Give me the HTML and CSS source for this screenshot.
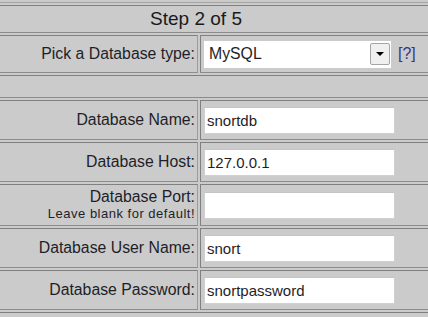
FILE: index.html
```html
<!DOCTYPE html>
<html>
<head>
	<title>Setup - Step 2 of 5</title>
	<link rel="stylesheet" href="styles.css">
</head>
<body>
	<div class="page">
		<table class="setup">
			<colgroup>
				<col class="col-label">
				<col class="col-field">
			</colgroup>
			<tr class="row-title">
				<td colspan="2">Step 2 of 5</td>
			</tr>
			<tr class="row-type">
				<td class="label">Pick a Database type:</td>
				<td class="field">
					<span class="select">
						<span class="select-value">MySQL</span>
						<span class="select-btn"><span class="arrow"></span></span>
					</span><a href="#" class="help">[?]</a>
				</td>
			</tr>
			<tr class="row-blank">
				<td colspan="2"></td>
			</tr>
			<tr class="row-input">
				<td class="label">Database Name:</td>
				<td class="field"><input type="text" value="snortdb"></td>
			</tr>
			<tr class="row-input">
				<td class="label">Database Host:</td>
				<td class="field"><input type="text" value="127.0.0.1"></td>
			</tr>
			<tr class="row-input row-port">
				<td class="label">Database Port:<br><span class="hint">Leave blank for default!</span></td>
				<td class="field"><input type="text" value=""></td>
			</tr>
			<tr class="row-input">
				<td class="label">Database User Name:</td>
				<td class="field"><input type="text" value="snort"></td>
			</tr>
			<tr class="row-input">
				<td class="label">Database Password:</td>
				<td class="field"><input type="text" value="snortpassword"></td>
			</tr>
			<tr class="row-blank">
				<td colspan="2"></td>
			</tr>
		</table>
	</div>
</body>
</html>
```

FILE: styles.css
```css
/* Reset default margin, padding, and box-sizing */
* {
	margin: 0;
	padding: 0;
	box-sizing: border-box;
}

body {
	font-family: "Liberation Sans", Arial, sans-serif;
	background-color: #cbcbcb;
	color: #1e1e28;
}

.page {
	width: 428px;
	height: 317px;
	overflow: hidden;
	padding-top: 2px;
}

.setup {
	width: 472px;
	margin-left: -40px;
	table-layout: fixed;
	border-collapse: separate;
	border-spacing: 2px;
	border-top: 1px solid #a4a4a4;
}

.setup .col-label {
	width: 236px;
}

.setup td {
	border: 1px solid #808080;
	border-right-color: #9c9c9c;
	border-bottom-color: #8c8c8c;
	font-size: 15.8px;
}

.row-title td {
	height: 28px;
	text-align: center;
	font-size: 19px;
	color: #1a1a1a;
}

.row-type td {
	height: 38px;
}

.row-blank td {
	height: 23px;
}

.row-input td {
	height: 40px;
}

.row-port td {
	height: 42px;
}

.setup .label {
	text-align: right;
	padding-right: 2px;
	white-space: nowrap;
}

.row-port .label {
	line-height: 16px;
	padding-top: 1px;
}

.row-port .hint {
	font-size: 13px;
	letter-spacing: 0.5px;
}

.setup .field {
	padding-left: 3px;
}

.field input {
	width: 191px;
	height: 27px;
	border: 1px solid #d0d0d0;
	border-top-color: #c4c4c4;
	background: #fff;
	font-family: "Liberation Sans", Arial, sans-serif;
	font-size: 15px;
	color: #1e1e28;
	padding: 0 2px;
	vertical-align: middle;
}

.select {
	display: inline-flex;
	align-items: center;
	justify-content: space-between;
	width: 187px;
	height: 27px;
	background: #fff;
	padding: 0 1px 0 5px;
	vertical-align: middle;
}

.select-btn {
	width: 20px;
	height: 22px;
	background: #f0f0f0;
	border: 1px solid #a6a6a6;
	border-radius: 2px;
	display: flex;
	align-items: center;
	justify-content: center;
}

.arrow {
	width: 0;
	height: 0;
	border-left: 4px solid transparent;
	border-right: 4px solid transparent;
	border-top: 4px solid #000;
}

.help {
	color: #34348a;
	text-decoration: none;
	margin-left: 7px;
	vertical-align: middle;
}
```
